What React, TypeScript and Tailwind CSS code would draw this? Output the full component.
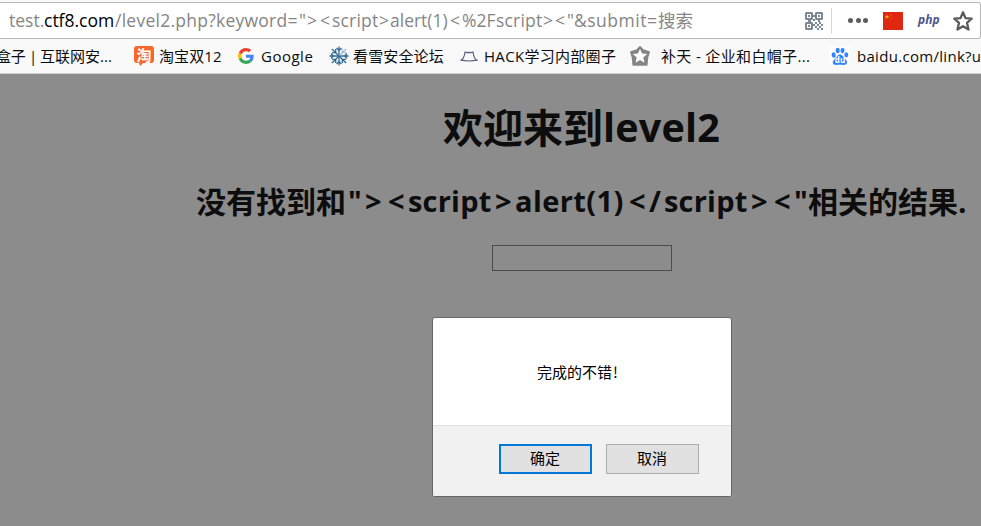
import type { ReactNode } from "react";

const latin = "font-['Open_Sans','Noto_Sans_CJK_SC',sans-serif]";

function Run({ className, children }: { className: string; children: ReactNode }) {
  return <span className={`block shrink-0 whitespace-pre ${className}`}>{children}</span>;
}

function QrIcon() {
  return (
    <svg className="h-[18px] w-[18px] shrink-0" viewBox="0 0 18 18" fill="#7e8893">
      <path fillRule="evenodd" d="M1 0H7L8 1V7L7 8H1L0 7V1ZM2 2V6H6V2ZM11 0H17L18 1V7L17 8H11L10 7V1ZM12 2V6H16V2ZM1 10H7L8 11V17L7 18H1L0 17V11ZM2 12V16H6V12Z" />
      <path d="M3 3h2v2H3zM13 3h2v2h-2zM3 13h2v2H3zM8 3h2v2H8zM8 7h2v2H8zM3 8h3v2H3zM13 8h2v2h-2z" />
      <path d="M10 10h2v2h-2zM14 10h2v2h-2zM12 12h2v2h-2zM16 12h2v2h-2zM10 14h2v2h-2zM14 14h2v2h-2zM12 16h2v2h-2zM16 16h2v2h-2zM8 12h2v2H8z" />
    </svg>
  );
}

function ChinaFlag() {
  return (
    <svg className="h-[18px] w-5 shrink-0" viewBox="0 0 20 18">
      <path fill="#de2910" d="M0 0h20v18H0z" />
      <path fill="#ffb400" d="m4 2.500.6 1.500h1.700L5 5.100l.5 1.600L4 5.700 2.500 6.700 3 5.100 1.700 4h1.700z" />
      <path fill="#e8650d" d="M6.500 1.500h1v1h-1zM7.800 3h1v1h-1zM7.800 5.500h1v1h-1zM6.500 7.200h1v1h-1z" />
    </svg>
  );
}

function OutlineStar() {
  return (
    <svg className="h-5 w-5 shrink-0" viewBox="0 0 20 20" fill="none" stroke="#5c5c5c" strokeWidth="2.3" strokeLinejoin="round">
      <path d="m10 1.300 2.500 5.800 6.200.6-4.700 4.100 1.500 6.700-5.500-3.300-5.500 3.300L6 11.800 1.300 7.700l6.200-.6z" />
    </svg>
  );
}

function TaobaoIcon() {
  return (
    <span className="relative block h-5 w-5 shrink-0">
      <svg className="block h-5 w-5" viewBox="0 0 20 20">
        <path fill="#f8662b" d="M3 0h14q3 0 3 3v11q0 3-3 3H9l-3 3-1-3H3q-3 0-3-3V3q0-3 3-3z" />
      </svg>
      <span className="absolute inset-x-0 top-0 text-center font-['Noto_Sans_CJK_SC',sans-serif] text-[15px] font-bold leading-[17px] text-white">淘</span>
    </span>
  );
}

function GoogleIcon() {
  return (
    <svg className="h-4 w-4 shrink-0" viewBox="0 0 48 48">
      <path fill="#EA4335" d="M24 9.5c3.54 0 6.71 1.22 9.21 3.6l6.85-6.85C35.9 2.38 30.47 0 24 0 14.62 0 6.51 5.38 2.56 13.22l7.98 6.19C12.43 13.72 17.74 9.5 24 9.5z" />
      <path fill="#4285F4" d="M46.98 24.55c0-1.57-.15-3.09-.38-4.55H24v9.02h12.94c-.58 2.96-2.26 5.48-4.78 7.18l7.73 6c4.51-4.18 7.09-10.36 7.09-17.65z" />
      <path fill="#FBBC05" d="M10.53 28.59A14.5 14.5 0 0 1 9.77 24c0-1.6.27-3.14.76-4.59l-7.98-6.19A23.99 23.99 0 0 0 0 24c0 3.87.92 7.54 2.56 10.78l7.97-6.19z" />
      <path fill="#34A853" d="M24 48c6.48 0 11.93-2.13 15.89-5.81l-7.73-6c-2.15 1.45-4.92 2.3-8.16 2.3-6.26 0-11.57-4.22-13.47-9.91l-7.98 6.19C6.51 42.62 14.62 48 24 48z" />
    </svg>
  );
}

function SnowflakeIcon() {
  return (
    <svg className="h-5 w-5 shrink-0" viewBox="0 0 20 20" fill="none" stroke="#316b95" strokeWidth="1.3">
      {[0, 90, 180, 270].map((a) => (
        <path key={a} transform={`rotate(${a} 10 10)`} d="M10 10V.5M7.500 2 10 4.500 12.500 2" />
      ))}
      {[45, 135, 225, 315].map((a) => (
        <path key={a} transform={`rotate(${a} 10 10)`} stroke={a === 45 ? "#a9c0d2" : "#316b95"} d="M10 10V0M7.500 2.700 10 5.500l2.500-2.800" />
      ))}
    </svg>
  );
}

function HatIcon() {
  return (
    <svg className="h-[11px] w-[18px] shrink-0" viewBox="0 0 18 11" fill="none" stroke="#565d7c" strokeWidth="1.2" strokeLinejoin="round">
      <path d="M.8 9.200C3.600 8.400 4.500 5 5 1l2 .6 2-.3 2 .3 2-.6c.5 4 1.400 7.400 4.200 8.200-5 1-11.400 1-16.400 0z" />
    </svg>
  );
}

function BadgeStar() {
  return (
    <svg className="h-5 w-5 shrink-0" viewBox="0 0 20 20">
      <path fill="#858585" stroke="#858585" strokeWidth="1.500" strokeLinejoin="round" d="m10 .8 3.200 3.200 6 2-1.700 5.500-.7 7.500H3.200l-.7-7.500L.8 6l6-2z" />
      <path fill="#fff" d="m10 3 2.100 4.600 5 .5-3.800 3.400 1.100 5.200-4.400-2.700-4.400 2.700 1.100-5.200L2.900 8.100l5-.5z" />
    </svg>
  );
}

function BaiduIcon() {
  return (
    <span className="relative block h-5 w-5 shrink-0 bg-white">
      <svg className="block h-5 w-5" viewBox="0 0 20 20" fill="#3385ff">
        <ellipse cx="3.700" cy="9" rx="2" ry="2.700" transform="rotate(-12 3.700 9)" />
        <ellipse cx="7.700" cy="4.500" rx="2" ry="2.800" />
        <ellipse cx="12.500" cy="4.500" rx="2" ry="2.800" transform="rotate(8 12.500 4.500)" />
        <ellipse cx="16.300" cy="8.800" rx="2" ry="2.600" />
        <path d="M10 8.500c2.600 0 3 2.600 5 4.300 4 3.400 1.500 6.700-1.500 6.200-2.500-.4-4.500-.4-7 0-3.500.5-5.500-3-1.500-6.200 2-1.700 2.400-4.300 5-4.300z" />
      </svg>
      <span className="absolute inset-x-0 top-[10px] text-center font-['Open_Sans',sans-serif] text-[8px] font-bold leading-[8px] text-white">du</span>
    </span>
  );
}

function AddressBar() {
  return (
    <div className={`flex h-[37px] w-[981px] items-center rounded-r-[3px] border-y border-r border-[#b8b8b8] bg-white pl-[9px] text-[17.5px] text-[#858585] ${latin}`}>
      <Run className="w-[35px]">test.</Run>
      <Run className="w-[71px] text-black">ctf8.com</Run>
      <Run className="w-[184px] tracking-[0.25px]">/level2.php?keyword=</Run>
      <Run className="w-[8px]">"</Run>
      <Run className="w-[13px]">&gt;</Run>
      <Run className="w-[12px]">&lt;</Run>
      <Run className="w-[47px] tracking-[0.2px]">script</Run>
      <Run className="w-[11px]">&gt;</Run>
      <Run className="w-[60px]">alert(1)</Run>
      <Run className="w-[12px]">&lt;</Run>
      <Run className="w-[34px]">%2F</Run>
      <Run className="w-[47px] tracking-[0.2px]">script</Run>
      <Run className="w-[12px]">&gt;</Run>
      <Run className="w-[12px]">&lt;</Run>
      <Run className="w-[7px]">"</Run>
      <Run className="w-[84px] tracking-[0.5px]">&amp;submit=</Run>
      <Run className="w-[147px]">搜索</Run>
      <QrIcon />
      <div className="ml-2 h-[26px] w-px bg-[#d8d8d8]" />
      <div className="ml-4 flex w-5 shrink-0 justify-between">
        <i className="h-[5px] w-[5px] rounded-full bg-[#5c5c5c]" />
        <i className="h-[5px] w-[5px] rounded-full bg-[#5c5c5c]" />
        <i className="h-[5px] w-[5px] rounded-full bg-[#5c5c5c]" />
      </div>
      <div className="ml-[15px]"><ChinaFlag /></div>
      <Run className="ml-[15px] w-[35px] pb-0.5 text-[12px] font-bold italic text-[#4c5589]">php</Run>
      <OutlineStar />
    </div>
  );
}

function BookmarksBar() {
  return (
    <div className={`flex h-[35px] w-[981px] items-center overflow-hidden border-b border-[#cfcfcf] bg-[#f9f9fa] text-[15px] text-[#0c0c0d] ${latin}`}>
      <Run className="-ml-1 w-[34px] -tracking-[0.3px]">盒子 |</Run>
      <Run className="ml-[10px] w-[94px]">互联网安...</Run>
      <TaobaoIcon />
      <Run className="ml-[5px] w-[79px] tracking-[0.1px]">淘宝双12</Run>
      <GoogleIcon />
      <Run className="ml-[7px] w-[68px] tracking-[0.5px]">Google</Run>
      <SnowflakeIcon />
      <Run className="ml-1 w-[107px] tracking-[0.15px]">看雪安全论坛</Run>
      <HatIcon />
      <Run className="ml-[6px] w-[146px] tracking-[0.3px]">HACK学习内部圈子</Run>
      <BadgeStar />
      <Run className="ml-[11px] w-[169px] tracking-[0.35px]">补天 - 企业和白帽子...</Run>
      <BaiduIcon />
      <Run className="ml-[7px] tracking-[0.3px]">baidu.com/link?u</Run>
    </div>
  );
}

function Dialog() {
  return (
    <div className="flex h-[180px] w-[300px] flex-col overflow-hidden rounded-[3px] border border-[#666] bg-white font-['Noto_Sans_CJK_SC',sans-serif] text-[15px] text-black">
      <div className="flex h-[107px] items-center pl-[104px] pt-0.5">
        完成的不错<span className="pl-px">!</span>
      </div>
      <div className="flex flex-1 gap-[14px] border-t border-[#dfdfdf] bg-[#f1f1f1] pl-[66px] pt-[18px]">
        <button className="h-[30px] w-[93px] border-2 border-[#0078d7] bg-[#e1e1e1] pb-[3px] pr-px leading-none">确定</button>
        <button className="h-[30px] w-[93px] border border-[#adadad] bg-[#e1e1e1] pb-[3px] pr-px leading-none">取消</button>
      </div>
    </div>
  );
}

export default function App() {
  return (
    <div className="h-[526px] w-[981px] overflow-hidden bg-[#f9f9fa] pt-0.5">
      <AddressBar />
      <BookmarksBar />
      <main className={`flex h-[452px] flex-col bg-[#8c8c8c] text-[#0d0d0d] ${latin}`}>
        <h1 className="ml-[443px] mt-[24px] flex h-[60px] items-center font-bold">
          <Run className="w-[160px] text-[40px]">欢迎来到</Run>
          <Run className="text-[39.5px] tracking-[0.2px]">level2</Run>
        </h1>
        <h2 className="ml-[196px] mt-[21px] flex h-[44px] items-center text-[29px] font-bold">
          <Run className="w-[152px] text-[30px]">没有找到和</Run>
          <Run className="w-[17px]">"</Run>
          <Run className="w-[23px]">&gt;</Run>
          <Run className="w-[20px]">&lt;</Run>
          <Run className="w-[87px] tracking-[0.2px]">script</Run>
          <Run className="w-[20px]">&gt;</Run>
          <Run className="w-[114px] tracking-[0.4px]">alert(1)</Run>
          <Run className="w-[20px]">&lt;</Run>
          <Run className="w-[15px]">/</Run>
          <Run className="w-[87px] tracking-[0.2px]">script</Run>
          <Run className="w-[23px]">&gt;</Run>
          <Run className="w-[20px]">&lt;</Run>
          <Run className="w-[14px]">"</Run>
          <Run className="text-[30px]">相关的结果.</Run>
        </h2>
        <input className="ml-[492px] mt-[22px] h-[26px] w-[180px] shrink-0 border border-[#4c4c4c] bg-transparent" />
        <div className="ml-[432px] mt-[46px]">
          <Dialog />
        </div>
      </main>
    </div>
  );
}
